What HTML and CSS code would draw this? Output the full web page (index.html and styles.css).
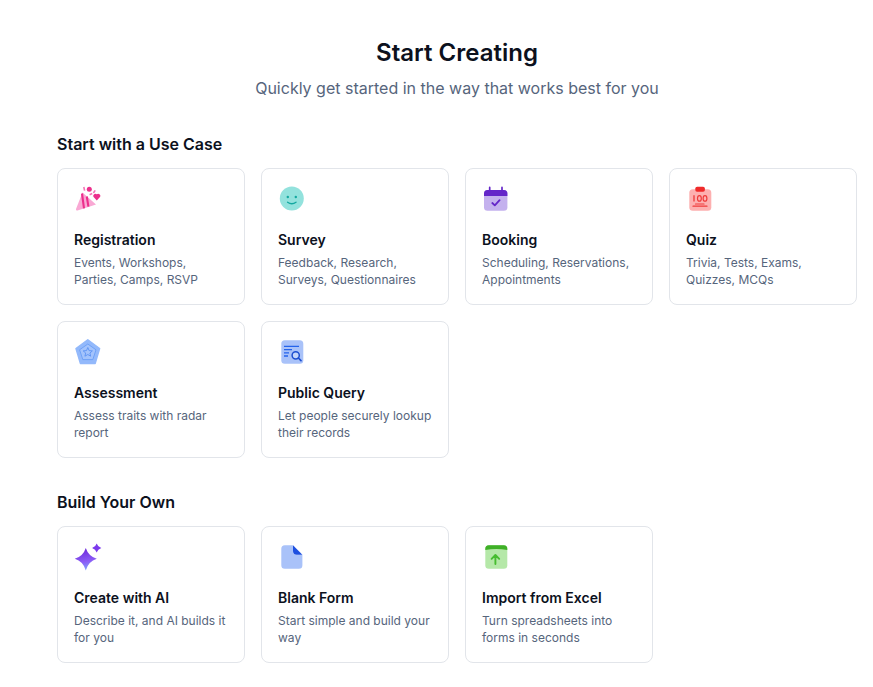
FILE: index.html
```html
<!DOCTYPE html>
<html lang="en">
<head>
    <meta charset="UTF-8">
    <title>Start Creating</title>
    <link rel="stylesheet" href="styles.css">
</head>
<body>
    <div class="page">
        <header class="page-head">
            <h1 class="page-title">Start Creating</h1>
            <p class="page-subtitle">Quickly get started in the way that works best for you</p>
        </header>

        <!-- Use cases -->
        <section class="section">
            <h2 class="section-title">Start with a Use Case</h2>
            <div class="card-grid">
                <div class="card">
                    <svg class="card-icon" viewBox="0 0 28 28">
                        <path d="M8.5 7.5 L22 19.5 L3.5 25.6 Q1.6 25.8 2 24 Z" fill="#f9a8d4"/>
                        <path d="M8 8.5 L10 23.4 M12.8 11.5 L14.4 21.6" stroke="#ec2f8c" stroke-width="2.1" fill="none"/>
                        <circle cx="15.3" cy="4.3" r="2.5" fill="#ec2f8c"/>
                        <path d="M22.8 15.4 L19.4 11.8 A2.2 2.2 0 0 1 22.8 9.2 A2.2 2.2 0 0 1 26.2 11.8 Z" fill="#ec2f8c"/>
                        <path d="M9.8 2 L10.6 5.6 M19.4 8 L21.2 5.4 M15.6 9.8 L18.2 8.6" stroke="#f472b6" stroke-width="1.6" fill="none"/>
                    </svg>
                    <h3 class="card-title">Registration</h3>
                    <p class="card-desc">Events, Workshops, Parties, Camps, RSVP</p>
                </div>
                <div class="card">
                    <svg class="card-icon" viewBox="0 0 28 28">
                        <circle cx="13.8" cy="13.5" r="12" fill="#93e2dd"/>
                        <circle cx="9.8" cy="12" r="1.2" fill="#14a8a0"/>
                        <circle cx="17.8" cy="12" r="1.2" fill="#14a8a0"/>
                        <path d="M9.6 17.2 Q13.8 20.2 18 17.2" stroke="#14a8a0" stroke-width="1.4" fill="none" stroke-linecap="round"/>
                    </svg>
                    <h3 class="card-title">Survey</h3>
                    <p class="card-desc">Feedback, Research, Surveys, Questionnaires</p>
                </div>
                <div class="card">
                    <svg class="card-icon" viewBox="0 0 28 28">
                        <rect x="2" y="5" width="23.4" height="20.8" rx="3.5" fill="#c4b1ee"/>
                        <path d="M2 11 V8.5 A3.5 3.5 0 0 1 5.5 5 H21.9 A3.5 3.5 0 0 1 25.4 8.5 V11 Z" fill="#6426c9"/>
                        <path d="M7.7 2.4 V6 M20 2.4 V6" stroke="#6426c9" stroke-width="1.7" stroke-linecap="round"/>
                        <path d="M10.3 18 L12.8 20.4 L17.6 15.2" stroke="#6426c9" stroke-width="1.8" fill="none" stroke-linecap="round" stroke-linejoin="round"/>
                    </svg>
                    <h3 class="card-title">Booking</h3>
                    <p class="card-desc">Scheduling, Reservations, Appointments</p>
                </div>
                <div class="card">
                    <svg class="card-icon" viewBox="0 0 28 28">
                        <rect x="3.3" y="4.3" width="22" height="21.4" rx="3.5" fill="#fdb0b0"/>
                        <rect x="9.3" y="1.7" width="9.6" height="5" rx="1.8" fill="#ef2b2b"/>
                        <path d="M8 10.3 V16.5" stroke="#ef3a3a" stroke-width="1.3"/>
                        <ellipse cx="13.4" cy="13.4" rx="1.9" ry="2.8" stroke="#ef3a3a" stroke-width="1.2" fill="none"/>
                        <ellipse cx="19" cy="13.4" rx="1.9" ry="2.8" stroke="#ef3a3a" stroke-width="1.2" fill="none"/>
                        <path d="M9.5 19 H18 M7 21.2 H21" stroke="#ef3a3a" stroke-width="1.2" stroke-linecap="round"/>
                    </svg>
                    <h3 class="card-title">Quiz</h3>
                    <p class="card-desc">Trivia, Tests, Exams, Quizzes, MCQs</p>
                </div>
                <div class="card">
                    <svg class="card-icon" viewBox="0 0 28 28">
                        <path d="M13.8 1.8 L25.6 10.6 L21.2 25.4 H6.4 L2 10.6 Z" fill="#93b9fb" stroke="#93b9fb" stroke-width="1.5" stroke-linejoin="round"/>
                        <path d="M13.8 6 L22 11.8 L18.8 21.6 H8.8 L5.6 11.8 Z" fill="#a3c3fc" stroke="#6a9ef5" stroke-width="0.9"/>
                        <path d="M13.8 9.5 L15.1 12.6 L18.4 12.9 L15.9 15 L16.7 18.2 L13.8 16.5 L10.9 18.2 L11.7 15 L9.2 12.9 L12.5 12.6 Z" fill="none" stroke="#5b92f3" stroke-width="0.9"/>
                    </svg>
                    <h3 class="card-title">Assessment</h3>
                    <p class="card-desc">Assess traits with radar report</p>
                </div>
                <div class="card">
                    <svg class="card-icon" viewBox="0 0 28 28">
                        <rect x="3.3" y="2.3" width="22" height="23.4" rx="3.5" fill="#a9c2f9"/>
                        <path d="M6 8.4 H21 M6 11.6 H14 M6 14.8 H11 M6 18 H10" stroke="#2563eb" stroke-width="1.3"/>
                        <circle cx="17.7" cy="17.3" r="3.6" fill="#c4d6fb" stroke="#1d4fd0" stroke-width="1.5"/>
                        <path d="M20.4 20 L23 22.6" stroke="#1d4fd0" stroke-width="1.7" stroke-linecap="round"/>
                    </svg>
                    <h3 class="card-title">Public Query</h3>
                    <p class="card-desc">Let people securely lookup their records</p>
                </div>
            </div>
        </section>

        <!-- Build your own -->
        <section class="section">
            <h2 class="section-title">Build Your Own</h2>
            <div class="card-grid">
                <div class="card">
                    <svg class="card-icon" viewBox="0 0 28 28">
                        <defs>
                            <linearGradient id="sparkle" x1="0.4" y1="0" x2="0.6" y2="1">
                                <stop offset="0" stop-color="#6d28d9"/>
                                <stop offset="0.6" stop-color="#8b5cf6"/>
                                <stop offset="1" stop-color="#7fa8fb"/>
                            </linearGradient>
                        </defs>
                        <path d="M11.8 5 Q14.4 13.2 22.8 15.8 Q14.4 18.4 11.8 27.4 Q9.2 18.4 0.8 15.8 Q9.2 13.2 11.8 5 Z" fill="url(#sparkle)"/>
                        <path d="M22.7 0.4 Q23.8 3.9 27.3 5 Q23.8 6.1 22.7 9.6 Q21.6 6.1 18.1 5 Q21.6 3.9 22.7 0.4 Z" fill="#7c3aed"/>
                    </svg>
                    <h3 class="card-title">Create with AI</h3>
                    <p class="card-desc">Describe it, and AI builds it for you</p>
                </div>
                <div class="card">
                    <svg class="card-icon" viewBox="0 0 28 28">
                        <path d="M6.8 2.3 H15 V8 A3.7 3.7 0 0 0 18.7 11.7 H24.4 V22.2 A3.5 3.5 0 0 1 20.9 25.7 H6.8 A3.5 3.5 0 0 1 3.3 22.2 V5.8 A3.5 3.5 0 0 1 6.8 2.3 Z" fill="#a9c2f9"/>
                        <path d="M15 2.3 L24.4 11.7 H18.7 A3.7 3.7 0 0 1 15 8 Z" fill="#1d4fe0"/>
                    </svg>
                    <h3 class="card-title">Blank Form</h3>
                    <p class="card-desc">Start simple and build your way</p>
                </div>
                <div class="card">
                    <svg class="card-icon" viewBox="0 0 28 28">
                        <rect x="3.3" y="2.3" width="22" height="23.4" rx="3.5" fill="#b5e8a8"/>
                        <path d="M3.3 7 V5.8 A3.5 3.5 0 0 1 6.8 2.3 H21.8 A3.5 3.5 0 0 1 25.3 5.8 V7 Q14.3 5 3.3 7 Z" fill="#3fb027"/>
                        <path d="M13.4 21 V12.5 M9.6 15.8 L13.4 12 L17.2 15.8" stroke="#47bd30" stroke-width="1.9" fill="none" stroke-linecap="round" stroke-linejoin="round"/>
                    </svg>
                    <h3 class="card-title">Import from Excel</h3>
                    <p class="card-desc">Turn spreadsheets into forms in seconds</p>
                </div>
            </div>
        </section>
    </div>
</body>
</html>
```

FILE: styles.css
```css
* {
    margin: 0;
    padding: 0;
    box-sizing: border-box;
    font-family: Inter, "Liberation Sans", sans-serif;
}

body {
    background-color: #fff;
    color: #0c111d;
}

.page {
    padding: 38px 16px 0 57px;
}

.page-head {
    text-align: center;
    margin-bottom: 32px;
}

.page-title {
    font-size: 24px;
    line-height: 30px;
    font-weight: 600;
    margin-bottom: 8px;
}

.page-subtitle {
    font-size: 16px;
    line-height: 24px;
    color: #56657c;
}

.section {
    margin-bottom: 32px;
}

.section-title {
    font-size: 16px;
    line-height: 24px;
    font-weight: 600;
    margin-bottom: 12px;
}

.card-grid {
    display: grid;
    grid-template-columns: repeat(4, 1fr);
    gap: 16px;
}

.card {
    height: 137px;
    padding: 16px;
    background: #fff;
    border: 1px solid #e2e5ea;
    border-radius: 8px;
}

.card-icon {
    display: block;
    width: 28px;
    height: 28px;
    margin-bottom: 17px;
}

.card-title {
    font-size: 14px;
    line-height: 20px;
    font-weight: 600;
    margin-bottom: 4px;
}

.card-desc {
    font-size: 12px;
    line-height: 17px;
    color: #56657c;
}
```
